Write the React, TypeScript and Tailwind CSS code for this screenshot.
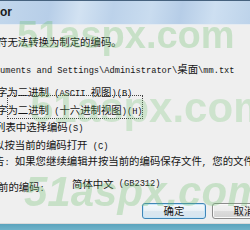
import React from 'react';

// splits a line into ascii / cjk runs so each gets the right font
function T({ s }: { s: string }) {
  const parts = s.match(/[\x00-\x7f]+|[^\x00-\x7f]+/g) || [];
  return (
    <>
      {parts.map((p, i) =>
        /^[\x00-\x7f]/.test(p) ? (
          <span key={i} className="font-['Liberation_Mono'] text-[8.7px]">{p}</span>
        ) : (
          <span key={i} className="font-['Noto_Sans_CJK_SC'] text-[10.4px]">{p}</span>
        )
      )}
    </>
  );
}

function Line({ s, className = '' }: { s: string; className?: string }) {
  return (
    <div className={`h-[14px] leading-[14px] whitespace-pre text-[#151515] ${className}`}>
      <T s={s} />
    </div>
  );
}

export default function App() {
  return (
    <div className="relative w-[250px] h-[230px] overflow-hidden bg-[#efefef] flex flex-col font-['Noto_Sans_CJK_SC',sans-serif]">
      {/* title bar */}
      <div className="h-[24px] shrink-0 border-t border-[#46627e] bg-[linear-gradient(100deg,#c2d7ec_0%,#b7cee8_20%,#d2e2f2_32%,#bcd2ea_45%,#c9dcef_60%,#b6cde7_72%,#cddff1_85%,#bdd3ea_100%)] flex items-center">
        <span className="font-['Liberation_Sans'] text-[12px] font-bold text-[#1b1b1b] leading-none -mt-[1px]">or</span>
      </div>
      <div className="h-[1px] bg-[#e4ebf2]" />

      <div className="flex flex-col overflow-hidden">
        <Line s="符无法转换为制定的编码。" className="mt-[7px] -ml-[3px]" />
        <Line s="uments and Settings\Administrator\桌面\mm.txt" className="mt-[13px]" />
        <Line s="字为二进制 (ASCII 视图)(B)" className="mt-[9px] -ml-[3px]" />
        <div className="mt-[4px] h-[14px] leading-[14px] whitespace-pre text-[#151515] -ml-[3px]">
          <T s="字" />
          <span className="outline-1 outline-dotted outline-[#444] -outline-offset-1">
            <T s="为二进制 (十六进制视图)(H)" />
          </span>
        </div>
        <Line s="列表中选择编码(S)" className="mt-[3px] -ml-[5px]" />
        <Line s="以按当前的编码打开 (C)" className="mt-[4px] -ml-[6px]" />
        <Line s="告: 如果您继续编辑并按当前的编码保存文件, 您的文件将被损坏" className="mt-[2px] -ml-[6px]" />
        <div className="mt-[12px] h-[14px] leading-[14px] whitespace-pre text-[#151515] flex -ml-[2px]">
          <div className="w-[74px] shrink-0"><T s="前的编码:" /></div>
          <T s="简体中文 (GB2312)" />
        </div>

        <div className="mt-[12px] flex gap-[6px] pl-[142px]">
          <button className="w-[64px] h-[16px] shrink-0 rounded-[3px] border border-[#3f86b8] bg-[linear-gradient(#f5f9fc,#e8f0f6_50%,#dbe7f0_50%,#d6e5f0)] shadow-[inset_0_0_0_1px_#c8e6f8] flex items-center justify-center text-[#151515] leading-none">
            <T s="确定" />
          </button>
          <button className="w-[64px] h-[16px] shrink-0 rounded-[3px] border border-[#8c8c8c] bg-[linear-gradient(#f3f3f3,#ebebeb_50%,#dddddd_50%,#d2d2d2)] shadow-[inset_0_0_0_1px_#fafafa] flex items-center justify-center text-[#151515] leading-none">
            <T s="取消" />
          </button>
        </div>
      </div>

      <div className="mt-auto h-[1px] bg-[#dadada]" />
      <div className="h-[6px] bg-[linear-gradient(#5ba3bd,#6fb2c9)]" />

      {/* watermark overlays */}
      <div className="pointer-events-none absolute left-[17px] top-[16px] font-['Liberation_Sans'] font-bold text-[38px] leading-none text-[#6cc06c] opacity-30 blur-[0.7px]">
        51aspx.com
      </div>
      <div className="pointer-events-none absolute left-[30px] top-[87px] font-['Liberation_Sans'] font-bold text-[42px] leading-none text-[#6cc06c] opacity-25 blur-[0.7px]">
        51aspx.com
      </div>
      <div className="pointer-events-none absolute left-[24px] top-[171px] font-['Liberation_Sans'] font-bold italic text-[42px] leading-none text-[#6cc06c] opacity-30 blur-[0.7px]">
        51aspx.com
      </div>
    </div>
  );
}
